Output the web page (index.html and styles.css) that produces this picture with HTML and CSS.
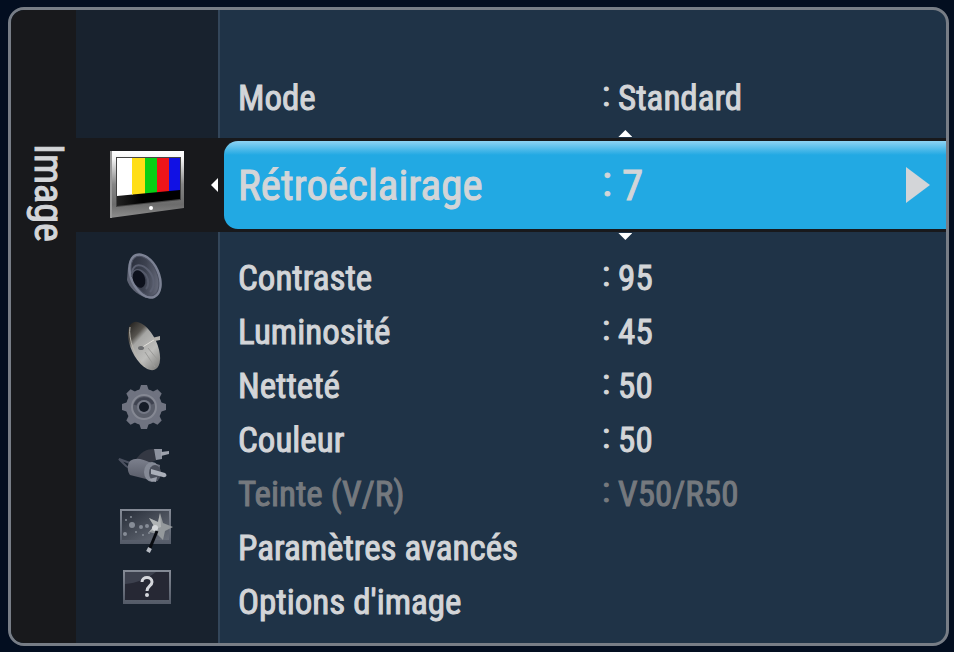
FILE: index.html
```
<!DOCTYPE html>
<html lang="fr">
<head>
    <meta charset="UTF-8">
    <meta name="viewport" content="width=device-width, initial-scale=1.0">
    <title>Image</title>
    <link rel="stylesheet" href="styles.css">
</head>
<body>
    <div class="panel">
        <h1 class="title">Image</h1>

        <nav class="menu">
            <button class="menu-item active" aria-label="Image">
                <svg width="78" height="72" viewBox="0 0 78 72">
                    <defs>
                        <linearGradient id="tvFrame" x1="0" y1="0" x2="0" y2="1">
                            <stop offset="0" stop-color="#fff"/>
                            <stop offset=".12" stop-color="#f4f4f4"/>
                            <stop offset=".5" stop-color="#858585"/>
                            <stop offset=".8" stop-color="#6c6c6c"/>
                            <stop offset="1" stop-color="#8e8e8e"/>
                        </linearGradient>
                        <linearGradient id="tvBase" x1="0" y1="0" x2="1" y2="0">
                            <stop offset="0" stop-color="#222"/>
                            <stop offset=".4" stop-color="#000"/>
                        </linearGradient>
                        <clipPath id="tvBars"><path d="M9 9H72V41L9 47Z"/></clipPath>
                    </defs>
                    <path d="M2 2H76V59L2 69Z" fill="url(#tvFrame)"/>
                    <path d="M2 2H4V69L2 69Z" fill="#999"/>
                    <path d="M8 8H73V51L8 58Z" fill="#444"/>
                    <path d="M9 9H72V50L9 57Z" fill="url(#tvBase)"/>
                    <g clip-path="url(#tvBars)">
                        <path d="M9 9H25V50H9Z" fill="#fff"/>
                        <path d="M24 9H37V50H24Z" fill="#ffde17"/>
                        <path d="M37 9H49V50H37Z" fill="#08cf14"/>
                        <path d="M49 9H61V50H49Z" fill="#ee1519"/>
                        <path d="M61 9H72V50H61Z" fill="#1111e4"/>
                    </g>
                    <circle cx="43" cy="59" r="2" fill="#fff"/>
                </svg>
                <span class="arrow-left"></span>
            </button>
            <button class="menu-item" aria-label="Son">
                <svg width="50" height="50" viewBox="0 0 50 50">
                    <defs>
                        <linearGradient id="cone" x1="0" y1="0" x2="1" y2="1">
                            <stop offset="0" stop-color="#252a37"/>
                            <stop offset=".5" stop-color="#3d4250"/>
                            <stop offset="1" stop-color="#747889"/>
                        </linearGradient>
                    </defs>
                    <path d="M9 16L8 29C10 36 17 43 27 47L35 44Z" fill="#5d6272"/>
                    <ellipse cx="26" cy="25" rx="15" ry="24" transform="rotate(-24 26 25)" fill="#7c8294"/>
                    <ellipse cx="26" cy="25" rx="12" ry="21" transform="rotate(-24 26 25)" fill="url(#cone)" stroke="#4b5060"/>
                    <path d="M13 22C14 12 23 12 30 20C36 27 36 36 31 41" fill="none" stroke="#5a5f70" stroke-width="2"/>
                    <path d="M13 26C14 17 21 17 27 24C30 29 30 35 27 38" fill="none" stroke="#555a6a" stroke-width="2"/>
                    <ellipse cx="20" cy="28" rx="6" ry="9" transform="rotate(-20 20 28)" fill="#0d111c"/>
                </svg>
            </button>
            <button class="menu-item tall" aria-label="Canal">
                <svg width="50" height="54" viewBox="0 0 50 54">
                    <defs>
                        <linearGradient id="dish" x1=".3" y1="0" x2=".5" y2="1">
                            <stop offset="0" stop-color="#24221f"/>
                            <stop offset=".25" stop-color="#56534e"/>
                            <stop offset=".36" stop-color="#a5a5a3"/>
                            <stop offset=".7" stop-color="#bebebc"/>
                            <stop offset="1" stop-color="#858583"/>
                        </linearGradient>
                    </defs>
                    <ellipse cx="25" cy="27" rx="13" ry="26" transform="rotate(-25 25 27)" fill="url(#dish)"/>
                    <path d="M11 8C9 20 16 38 26 48" fill="none" stroke="#b9b6ae" stroke-width="1"/>
                    <path d="M22 29L38 19" fill="none" stroke="#e2e0db" stroke-width="1"/>
                    <path d="M33 19L41 17V21L36 22Z" fill="#b5b3ae"/>
                    <ellipse cx="22" cy="29" rx="3" ry="2" fill="#6b6d70"/>
                    <path d="M26 33L36 48M29 29L38 40" fill="none" stroke="#9a9a98" stroke-width="1"/>
                </svg>
            </button>
            <button class="menu-item" aria-label="Configuration">
                <svg width="50" height="50" viewBox="0 0 50 50">
                    <g fill="#6f7380">
                        <circle cx="25" cy="25" r="18"/>
                        <path id="tooth" d="M20 9L22 3H28L30 9Z"/>
                        <use href="#tooth" transform="rotate(45 25 25)"/>
                        <use href="#tooth" transform="rotate(90 25 25)"/>
                        <use href="#tooth" transform="rotate(135 25 25)"/>
                        <use href="#tooth" transform="rotate(180 25 25)"/>
                        <use href="#tooth" transform="rotate(225 25 25)"/>
                        <use href="#tooth" transform="rotate(270 25 25)"/>
                        <use href="#tooth" transform="rotate(315 25 25)"/>
                    </g>
                    <circle cx="25" cy="25" r="12" fill="#5a5e6a" stroke="#858893" stroke-width="2"/>
                    <path d="M16 23A10 10 0 0 1 34 22" fill="none" stroke="#3f4350" stroke-width="3"/>
                    <circle cx="25" cy="25" r="7" fill="#747885"/>
                    <circle cx="25" cy="25" r="5" fill="#151b26"/>
                </svg>
            </button>
            <button class="menu-item" aria-label="Entrée">
                <svg width="56" height="40" viewBox="0 0 56 40">
                    <defs>
                        <linearGradient id="plug" x1="0" y1="0" x2="0" y2="1">
                            <stop offset="0" stop-color="#7c808d"/>
                            <stop offset="1" stop-color="#555965"/>
                        </linearGradient>
                    </defs>
                    <path d="M20 15C24 7 31 4 38 4L41 15L33 18Z" fill="#343843"/>
                    <path d="M38 4L46 4V14L40 15Z" fill="#8d929e"/>
                    <path d="M45 7L53 6V9L45 11Z" fill="#9da2ac"/>
                    <path d="M14 18L3 14L10 21L15 24" fill="none" stroke="#4b5160" stroke-width="2"/>
                    <path d="M14 16C20 12 26 14 33 17L44 20L42 36L30 34L14 30C11 26 11 20 14 16Z" fill="url(#plug)"/>
                    <ellipse cx="36" cy="27" rx="8" ry="10" fill="#858a96"/>
                    <ellipse cx="39" cy="28" rx="6" ry="8" fill="#4a4f5b"/>
                    <path d="M35 24L49 28C52 30 50 33 47 32L35 29Z" fill="#aaafb9"/>
                    <path d="M33 34L41 32L40 37L35 36Z" fill="#9a9faa"/>
                </svg>
            </button>
            <button class="menu-item wand" aria-label="Application">
                <svg width="56" height="48" viewBox="0 0 56 48">
                    <defs>
                        <linearGradient id="screen" x1="0" y1="0" x2="1" y2="1">
                            <stop offset="0" stop-color="#272d38"/>
                            <stop offset="1" stop-color="#6a707b"/>
                        </linearGradient>
                        <linearGradient id="frame" x1="0" y1="0" x2="0" y2="1">
                            <stop offset="0" stop-color="#858b96"/>
                            <stop offset="1" stop-color="#535a67"/>
                        </linearGradient>
                    </defs>
                    <path d="M2 2H53V37H2Z" fill="url(#frame)"/>
                    <path d="M4 4H51V33H4Z" fill="url(#screen)"/>
                    <g fill="#868c96">
                        <circle cx="8" cy="13" r="1"/>
                        <circle cx="14" cy="18" r="3"/>
                        <circle cx="7" cy="27" r="2"/>
                        <circle cx="23" cy="20" r="2"/>
                        <circle cx="18" cy="25" r="1"/>
                        <circle cx="29" cy="19" r="2"/>
                        <circle cx="25" cy="28" r="1"/>
                        <circle cx="13" cy="10" r="1"/>
                        <circle cx="31" cy="26" r="1"/>
                    </g>
                    <path d="M42 6L45 16L55 20L47 24L45 33L39 27L31 25L36 19L31 11L40 15Z" fill="#94999c"/>
                    <path d="M42 6L43 20L31 25L36 19L31 11L40 15Z" fill="#c3c6c6" opacity=".6"/>
                    <circle cx="37" cy="21" r="3" fill="#d5d8da"/>
                    <path d="M39 24L32 41" stroke="#080b10" stroke-width="3"/>
                    <path d="M32 41L30 45" stroke="#b8bdc5" stroke-width="4"/>
                </svg>
            </button>
            <button class="menu-item help" aria-label="Assistance">
                <svg width="50" height="38" viewBox="0 0 50 38">
                    <path d="M1 2H49V36H1Z" fill="url(#frame)"/>
                    <path d="M3 4H47V32H3Z" fill="#262834"/>
                    <path d="M3 4H34C25 11 15 15 3 16Z" fill="#3d414e"/>
                    <path d="M20 14C20 8 30 8 30 14C30 18 25 18 25 23" fill="none" stroke="#d5d7dc" stroke-width="3"/>
                    <circle cx="25" cy="27" r="2" fill="#d5d7dc"/>
                </svg>
            </button>
        </nav>

        <main class="settings">
            <button class="row">
                <span class="label">Mode</span>
                <span class="value"><span class="colon">:</span>Standard</span>
            </button>
            <div class="selected">
                <span class="arrow-up"></span>
                <button class="row">
                    <span class="label">Rétroéclairage</span>
                    <span class="value"><span class="colon">:</span>7</span>
                    <span class="arrow-right"></span>
                </button>
                <span class="arrow-down"></span>
            </div>
            <button class="row">
                <span class="label">Contraste</span>
                <span class="value"><span class="colon">:</span>95</span>
            </button>
            <button class="row">
                <span class="label">Luminosité</span>
                <span class="value"><span class="colon">:</span>45</span>
            </button>
            <button class="row">
                <span class="label">Netteté</span>
                <span class="value"><span class="colon">:</span>50</span>
            </button>
            <button class="row">
                <span class="label">Couleur</span>
                <span class="value"><span class="colon">:</span>50</span>
            </button>
            <button class="row" disabled>
                <span class="label">Teinte (V/R)</span>
                <span class="value"><span class="colon">:</span>V50/R50</span>
            </button>
            <button class="row">
                <span class="label">Paramètres avancés</span>
            </button>
            <button class="row">
                <span class="label">Options d'image</span>
            </button>
        </main>
    </div>
</body>
</html>
```
FILE: styles.css
```
* { box-sizing: border-box; }

body {
    margin: 0;
    min-height: 100vh;
    padding: 7px 5px 6px 8px;
    display: flex;
    background: #030e20;
    font-family: "Roboto Condensed", "Liberation Sans Narrow", "Liberation Sans", sans-serif;
    color: #d3d5d8;
}

button {
    border: 0;
    padding: 0;
    background: none;
    color: inherit;
    font: inherit;
    text-align: left;
    cursor: pointer;
}

svg { display: block; }

.panel {
    flex: 1;
    display: grid;
    grid-template-columns: 65px 142px 1fr;
    border: 3px solid #777d86;
    border-radius: 16px;
    overflow: hidden;
    background: #1f3347;
}

.title {
    margin: 0;
    padding-top: 134px;
    background: #18191c;
    writing-mode: vertical-rl;
    font-size: 40px;
    font-weight: normal;
    line-height: 56px;
    -webkit-text-stroke: 1px;
}

/* icon column */
.menu {
    padding-top: 128px;
    background: #18222e;
    display: flex;
    flex-direction: column;
}

.menu-item {
    height: 58px;
    padding-right: 6px;
    display: flex;
    align-items: center;
    justify-content: center;
}

.menu-item.active {
    position: relative;
    height: 94px;
    margin-bottom: 15px;
    padding: 0;
    background: #18191c;
}

.menu-item.tall {
    height: 73px;
    padding-top: 8px;
}

.menu-item.wand {
    height: 66px;
    padding-top: 8px;
    padding-right: 2px;
}

.menu-item.help {
    height: 54px;
    padding-right: 0;
}

/* settings list */
.settings {
    border-left: 2px solid #33465a;
    padding-top: 61px;
    display: flex;
    flex-direction: column;
}

.row {
    height: 54px;
    padding-left: 18px;
    display: grid;
    grid-template-columns: 18fr 17fr;
    align-items: center;
    font-size: 35px;
    -webkit-text-stroke: 1px;
}

.row:disabled { color: #75797e; }

.value { display: flex; }

.colon {
    width: 16px;
    margin-top: -4px;
}

.selected {
    position: relative;
    margin: 13px 0 19px -2px;
    padding: 3px 0 3px 6px;
    background: #18191c;
}

.selected .row {
    width: 100%;
    height: 88px;
    padding-left: 14px;
    padding-right: 16px;
    grid-template-columns: 364fr 304fr 24px;
    border-radius: 14px 0 0 14px;
    background: linear-gradient(#8ed3f3, #22a9e3 14px);
    font-size: 43px;
}

.selected .colon { width: 20px; }

.arrow-left, .arrow-up, .arrow-down {
    position: absolute;
    background: #fff;
}

.arrow-left {
    right: 0;
    top: 40px;
    width: 7px;
    height: 14px;
    clip-path: polygon(100% 0, 100% 100%, 0 50%);
}

.arrow-up, .arrow-down {
    left: 55%;
    width: 14px;
    height: 7px;
}

.arrow-up {
    top: -8px;
    clip-path: polygon(50% 0, 100% 100%, 0 100%);
}

.arrow-down {
    bottom: -8px;
    clip-path: polygon(0 0, 100% 0, 50% 100%);
}

.arrow-right {
    width: 24px;
    height: 36px;
    background: #d3d5d8;
    clip-path: polygon(0 0, 100% 50%, 0 100%);
}
```
